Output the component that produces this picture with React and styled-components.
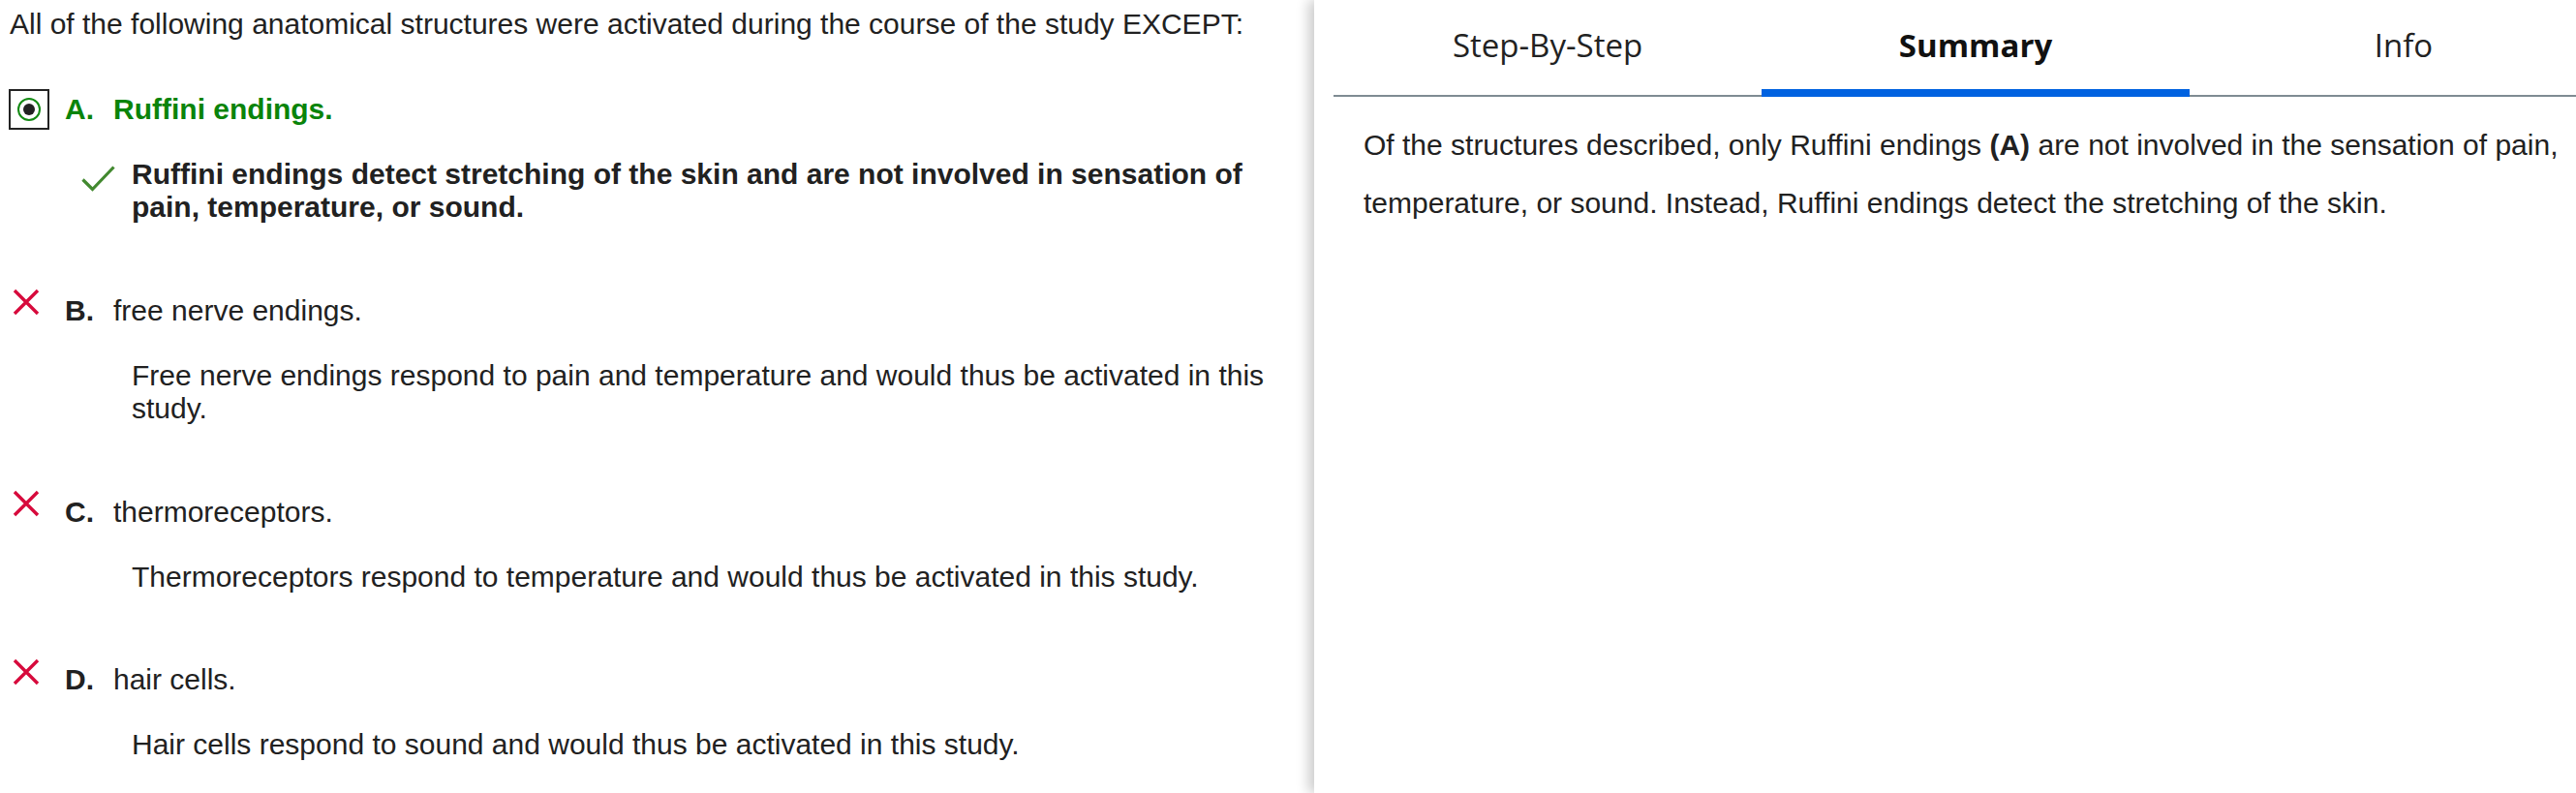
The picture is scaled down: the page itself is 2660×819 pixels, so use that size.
import React from 'react'
import styled, { createGlobalStyle } from 'styled-components'

const options = [
  {
    letter: 'A',
    text: 'Ruffini endings.',
    status: 'selected',
    explanation:
      'Ruffini endings detect stretching of the skin and are not involved in sensation of pain, temperature, or sound.',
  },
  {
    letter: 'B',
    text: 'free nerve endings.',
    status: 'wrong',
    explanation:
      'Free nerve endings respond to pain and temperature and would thus be activated in this study.',
  },
  {
    letter: 'C',
    text: 'thermoreceptors.',
    status: 'wrong',
    explanation: 'Thermoreceptors respond to temperature and would thus be activated in this study.',
  },
  {
    letter: 'D',
    text: 'hair cells.',
    status: 'wrong',
    explanation: 'Hair cells respond to sound and would thus be activated in this study.',
  },
]

const tabs = ['Step-By-Step', 'Summary', 'Info']

function CrossIcon() {
  return (
    <CrossSvg width="28" height="28" viewBox="0 0 28 28">
      <path d="M2 2 L26 26 M26 2 L2 26" stroke="#d70a3c" strokeWidth="3.4" fill="none" />
    </CrossSvg>
  )
}

function CheckIcon() {
  return (
    <CheckSvg width="35" height="27" viewBox="0 0 35 27">
      <path d="M1.5 14.5 L11.5 24.5 L33.5 1.5" stroke="#42892f" strokeWidth="3.2" fill="none" />
    </CheckSvg>
  )
}

function App() {
  return (
    <>
      <GlobalStyle />
      <Page>
        <QuestionPanel>
          <Stem>All of the following anatomical structures were activated during the course of the study EXCEPT:</Stem>
          {options.map((o) => (
            <Option key={o.letter}>
              <OptionRow>
                <Slot>
                  {o.status === 'selected' ? (
                    <RadioBox>
                      <RadioRing>
                        <RadioDot />
                      </RadioRing>
                    </RadioBox>
                  ) : (
                    <CrossIcon />
                  )}
                </Slot>
                <Letter $correct={o.status === 'selected'}>{o.letter}.</Letter>
                <ChoiceText $correct={o.status === 'selected'}>{o.text}</ChoiceText>
              </OptionRow>
              <Explanation>
                <ExplainSlot>{o.status === 'selected' && <CheckIcon />}</ExplainSlot>
                <ExplainText $bold={o.status === 'selected'}>{o.explanation}</ExplainText>
              </Explanation>
            </Option>
          ))}
        </QuestionPanel>

        <SolutionPanel>
          <TabBar>
            {tabs.map((t) => (
              <Tab key={t} $active={t === 'Summary'}>
                {t}
              </Tab>
            ))}
          </TabBar>
          <Summary>
            Of the structures described, only Ruffini endings <b>(A)</b> are not involved in the sensation of pain,
            temperature, or sound. Instead, Ruffini endings detect the stretching of the skin.
          </Summary>
        </SolutionPanel>
      </Page>
    </>
  )
}

const GlobalStyle = createGlobalStyle`
  html, body {
    margin: 0;
    padding: 0;
    background: #fff;
    overflow: hidden;
  }
  body {
    font-family: "Liberation Sans", Arial, sans-serif;
    color: #212121;
  }
`

const Page = styled.div`
  display: flex;
  width: 100vw;
  height: 819px;
  overflow: hidden;
`

const QuestionPanel = styled.div`
  flex: 0 0 1357px;
  box-sizing: border-box;
  padding: 8px 25px 0 10px;
  font-size: 30px;
`

const Stem = styled.p`
  margin: 0 0 49.5px;
  line-height: 34.5px;
`

const Option = styled.div`
  margin-bottom: 68.5px;
`

const OptionRow = styled.div`
  display: flex;
  align-items: center;
  height: 42px;
  line-height: 34.5px;
`

const Slot = styled.div`
  flex: 0 0 42px;
  height: 42px;
  margin-left: -1px;
  margin-right: 16px;
  display: flex;
  align-items: flex-start;
`

const RadioBox = styled.div`
  width: 42px;
  height: 42px;
  box-sizing: border-box;
  border: 2px solid #232323;
  display: flex;
  align-items: center;
  justify-content: center;
`

const RadioRing = styled.div`
  width: 24px;
  height: 24px;
  box-sizing: border-box;
  border: 2.4px solid #138a13;
  border-radius: 50%;
  display: flex;
  align-items: center;
  justify-content: center;
`

const RadioDot = styled.div`
  width: 12px;
  height: 12px;
  border-radius: 50%;
  background: #222;
`

const CrossSvg = styled.svg`
  margin: -2px 0 0 4px;
`

const Letter = styled.span`
  flex: 0 0 50px;
  font-weight: bold;
  color: ${(p) => (p.$correct ? '#0a840a' : '#212121')};
`

const ChoiceText = styled.span`
  font-weight: ${(p) => (p.$correct ? 'bold' : 'normal')};
  color: ${(p) => (p.$correct ? '#0a840a' : '#212121')};
`

const Explanation = styled.div`
  display: flex;
  align-items: flex-start;
  margin: 28.5px 0 0 74px;
`

const ExplainSlot = styled.div`
  flex: 0 0 52px;
`

const CheckSvg = styled.svg`
  display: block;
  margin-top: 8px;
`

const ExplainText = styled.p`
  margin: 0;
  line-height: 34.5px;
  font-weight: ${(p) => (p.$bold ? 'bold' : 'normal')};
`

const SolutionPanel = styled.div`
  flex: 0 0 1365px;
  box-sizing: border-box;
  padding-left: 20px;
  position: relative;
  z-index: 1;
  background: #fff;
  box-shadow: -6px 0 12px rgba(0, 0, 0, 0.2);
`

const TabBar = styled.div`
  display: flex;
  border-bottom: 2px solid #7f8b93;
`

const Tab = styled.div`
  position: relative;
  flex: 0 0 442px;
  height: 98px;
  box-sizing: border-box;
  padding-bottom: 5px;
  display: flex;
  align-items: center;
  justify-content: center;
  font-family: "Open Sans", "Noto Sans", sans-serif;
  font-size: 33px;
  font-weight: ${(p) => (p.$active ? 700 : 400)};
  color: ${(p) => (p.$active ? '#111' : '#222')};

  &::after {
    content: '';
    display: ${(p) => (p.$active ? 'block' : 'none')};
    position: absolute;
    left: 0;
    right: 0;
    bottom: -2px;
    height: 8px;
    background: #0062e0;
  }
`

const Summary = styled.p`
  margin: 0;
  padding: 20px 30px 0 31px;
  font-size: 30px;
  line-height: 60px;
`

export default App
